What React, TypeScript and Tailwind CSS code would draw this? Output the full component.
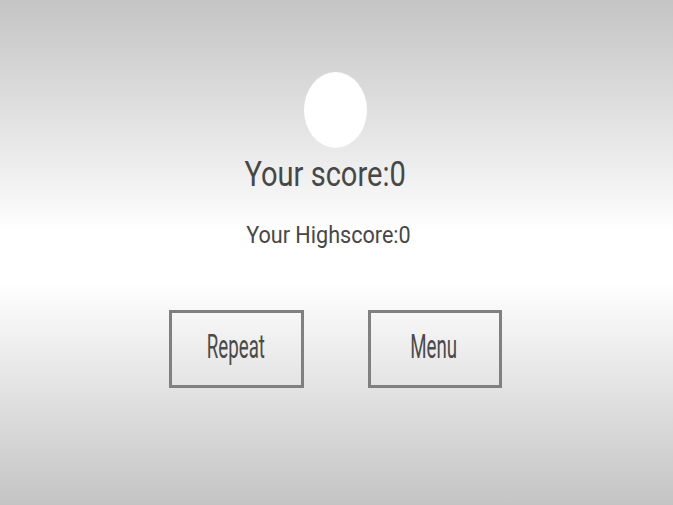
import React from 'react';

const App: React.FC = () => {
  return (
    <div
      className="w-full h-[505px] overflow-hidden flex flex-col items-center bg-[linear-gradient(to_bottom,#c4c4c4_0%,#f4f4f4_38%,#ffffff_46%,#ffffff_56%,#f4f4f4_64%,#c4c4c4_100%)] text-[#474747]"
      style={{ fontFamily: 'Roboto, "Liberation Sans", sans-serif' }}
    >
      {/* ball */}
      <div className="mt-[72px] w-[63px] h-[76px] rounded-[50%] bg-white mr-[2px]" />

      {/* scores */}
      <div className="mt-[4px] h-[44px] flex items-center justify-center mr-[22px]">
        <span className="text-[35px] leading-none scale-x-[0.83] whitespace-nowrap">Your score:0</span>
      </div>
      <div className="mt-[24px] h-[30px] flex items-center justify-center mr-[16px]">
        <span className="text-[24px] leading-none scale-x-[0.9] whitespace-nowrap">Your Highscore:0</span>
      </div>

      {/* buttons */}
      <div className="mt-[60px] flex gap-[64px] mr-[3px]">
        <button className="w-[135px] h-[78px] border-[3px] border-[#808080] flex items-center justify-center pb-[6px]">
          <span className="text-[34px] leading-none scale-x-[0.55] whitespace-nowrap text-[#4a4a4a]">Repeat</span>
        </button>
        <button className="w-[134px] h-[78px] border-[3px] border-[#808080] flex items-center justify-center pb-[6px]">
          <span className="text-[34px] leading-none scale-x-[0.55] whitespace-nowrap text-[#4a4a4a] -ml-[2px]">Menu</span>
        </button>
      </div>
    </div>
  );
};

export default App;
